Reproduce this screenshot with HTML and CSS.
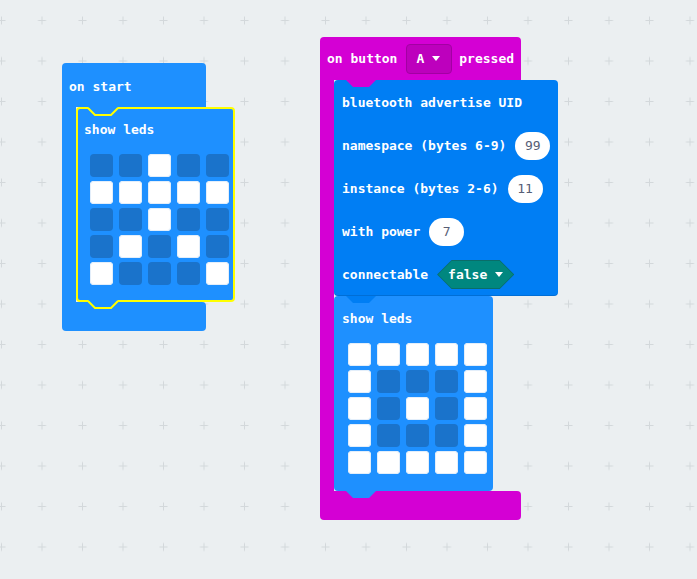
FILE: index.html
```html
<!DOCTYPE html>
<html lang="en">
<head>
  <meta charset="UTF-8" />
  <title>Blocks</title>
  <link rel="stylesheet" href="styles.css">
</head>
<body>

<div class="workspace">
  <svg class="grid" width="697" height="579">
    <defs>
      <pattern id="dots" width="40.5" height="40.5" x="-18.75" y="0.25" patternUnits="userSpaceOnUse">
        <path d="M16.25 20.25 H24.25 M20.25 16.25 V24.25" stroke="#d3d8db" stroke-width="1" />
      </pattern>
    </defs>
    <rect width="697" height="579" fill="url(#dots)" />
  </svg>

  <!-- on start -->
  <div class="stack stack-start">
    <div class="c-block">
      <div class="c-head basic">on start</div>
      <div class="c-mid">
        <div class="c-arm basic"></div>
        <div class="c-body">
          <div class="block leds basic selected">
            <svg class="notch-top" width="30" height="10" viewBox="0 0 30 10">
              <path class="fill-basic" d="M0 0 L7 7 L23 7 L30 0 Z" />
              <path class="stroke-sel" d="M0 1 L7 8 L23 8 L30 1" />
            </svg>
            <div class="label">show leds</div>
            <div class="matrix">
              <i></i><i></i><i class="on"></i><i></i><i></i>
              <i class="on"></i><i class="on"></i><i class="on"></i><i class="on"></i><i class="on"></i>
              <i></i><i></i><i class="on"></i><i></i><i></i>
              <i></i><i class="on"></i><i></i><i class="on"></i><i></i>
              <i class="on"></i><i></i><i></i><i></i><i class="on"></i>
            </div>
            <svg class="notch-bottom" width="30" height="10" viewBox="0 0 30 10">
              <path class="fill-basic" d="M0 0 H30 L23 7 H7 Z" />
              <path class="stroke-sel" d="M0 1 L7 8 L23 8 L30 1" />
            </svg>
          </div>
        </div>
      </div>
      <div class="c-foot basic"></div>
    </div>
  </div>

  <!-- on button A pressed -->
  <div class="stack stack-button">
    <div class="c-block">
      <div class="c-head input">
        <span>on button</span>
        <span class="dropdown">A
          <svg class="arrow" width="8" height="5" viewBox="0 0 8 5"><path d="M0 0 H8 L4 5 Z" /></svg>
        </span>
        <span class="after">pressed</span>
      </div>
      <div class="c-mid">
        <div class="c-arm input"></div>
        <div class="c-body">
          <div class="block bt-block bt">
            <svg class="notch-top" width="30" height="7" viewBox="0 0 30 7">
              <path class="fill-input" d="M0 0 L7 7 L23 7 L30 0 Z" />
            </svg>
            <div class="row">bluetooth advertise UID</div>
            <div class="row">namespace (bytes 6-9) <span class="num">99</span></div>
            <div class="row">instance (bytes 2-6) <span class="num">11</span></div>
            <div class="row">with power <span class="num">7</span></div>
            <div class="row">connectable
              <span class="hex"><span class="hex-in">false
                <svg class="arrow" width="8" height="5" viewBox="0 0 8 5"><path d="M0 0 H8 L4 5 Z" /></svg>
              </span></span>
            </div>
          </div>
          <div class="block leds basic">
            <svg class="notch-top" width="30" height="7" viewBox="0 0 30 7">
              <path class="fill-bt" d="M0 0 L7 7 L23 7 L30 0 Z" />
            </svg>
            <div class="label">show leds</div>
            <div class="matrix">
              <i class="on"></i><i class="on"></i><i class="on"></i><i class="on"></i><i class="on"></i>
              <i class="on"></i><i></i><i></i><i></i><i class="on"></i>
              <i class="on"></i><i></i><i class="on"></i><i></i><i class="on"></i>
              <i class="on"></i><i></i><i></i><i></i><i class="on"></i>
              <i class="on"></i><i class="on"></i><i class="on"></i><i class="on"></i><i class="on"></i>
            </div>
            <svg class="notch-bottom" width="30" height="7" viewBox="0 0 30 7">
              <path class="fill-basic" d="M0 0 H30 L23 7 H7 Z" />
            </svg>
          </div>
        </div>
      </div>
      <div class="c-foot input"></div>
    </div>
  </div>
</div>

</body>
</html>
```

FILE: styles.css
```css
* {
  box-sizing: border-box;
}
body {
  margin: 0;
  background: #ebeff1;
  font-family: "DejaVu Sans Mono", "Liberation Mono", monospace;
  font-weight: bold;
  font-size: 13px;
  color: #fff;
}
.workspace {
  position: relative;
  width: 697px;
  height: 579px;
  overflow: hidden;
}
.grid {
  position: absolute;
  top: 0;
  left: 0;
}

/* colours */
.basic { background: #1e90ff; }
.input { background: #d400d4; }
.bt { background: #007ef4; }
.fill-basic { fill: #1e90ff; }
.fill-input { fill: #d400d4; }
.fill-bt { fill: #007ef4; }
.stroke-sel {
  fill: none;
  stroke: #ffff00;
  stroke-width: 2;
}

/* stacks sit on the free canvas */
.stack {
  position: absolute;
}
.stack-start {
  left: 62px;
  top: 63px;
}
.stack-button {
  left: 320px;
  top: 37px;
}

.c-block {
  display: flex;
  flex-direction: column;
  align-items: flex-start;
}
.c-head {
  display: flex;
  align-items: center;
  padding-left: 7px;
  border-radius: 4px 4px 0 0;
  white-space: nowrap;
}
.stack-start .c-head,
.stack-start .c-foot {
  width: 144px;
}
.stack-start .c-head {
  height: 44px;
  padding-top: 3px;
}
.stack-button .c-head,
.stack-button .c-foot {
  width: 201px;
}
.stack-button .c-head {
  height: 43px;
}
.c-mid {
  display: flex;
}
.c-arm {
  width: 14px;
}
.c-body {
  display: flex;
  flex-direction: column;
  align-items: flex-start;
}
.c-foot {
  height: 29px;
  border-radius: 0 4px 4px 4px;
}

.dropdown {
  display: inline-flex;
  align-items: center;
  height: 30px;
  margin-left: 9px;
  padding: 0 11px 0 9px;
  background: #bd00bd;
  border: 1px solid #a300a3;
  border-radius: 4px;
}
.arrow {
  margin-left: 8px;
  fill: #fff;
}
.after {
  margin-left: 7px;
}

/* statement blocks */
.block {
  position: relative;
  border-radius: 4px;
}
.notch-top {
  position: absolute;
  left: 12px;
  top: 0;
  overflow: visible;
  z-index: 1;
}
.notch-bottom {
  position: absolute;
  left: 12px;
  top: 100%;
  overflow: visible;
  z-index: 1;
}
.selected {
  border: 2px solid #ffff00;
}
.selected .notch-top {
  left: 10px;
  top: -2px;
}
.selected .notch-bottom {
  left: 10px;
}

.leds {
  width: 159px;
  height: 195px;
  padding: 15px 0 0 14px;
}
.leds.selected {
  padding: 13px 0 0 12px;
}
.leds .label {
  margin-left: -6px;
  height: 16px;
  line-height: 16px;
}
.matrix {
  margin-top: 16px;
  display: grid;
  grid-template-columns: repeat(5, 23px);
  grid-auto-rows: 23px;
  column-gap: 6px;
  row-gap: 4px;
}
.matrix i {
  border-radius: 4px;
  background: #1a73cb;
}
.matrix i.on {
  background: #fff;
  box-shadow: inset 0 0 0 1px #e3eefa;
}

.bt-block {
  width: 224px;
  padding: 1px 0 0 8px;
  box-shadow: inset 0 -1px 0 rgba(0, 0, 0, 0.12);
}
.row {
  height: 43px;
  display: flex;
  align-items: center;
  gap: 9px;
  white-space: nowrap;
}
.num {
  display: inline-flex;
  justify-content: center;
  align-items: center;
  min-width: 35px;
  height: 28px;
  padding: 0 9px;
  border-radius: 14px;
  background: #fff;
  color: #575e75;
  font-weight: normal;
}
.hex {
  display: inline-flex;
  padding: 1px;
  background: #0a6d69;
  clip-path: polygon(0 50%, 14.5px 0, calc(100% - 14.5px) 0, 100% 50%, calc(100% - 14.5px) 100%, 14.5px 100%);
}
.hex-in {
  display: inline-flex;
  align-items: center;
  height: 27px;
  padding: 0 10px 0 10px;
  background: #00877f;
  clip-path: polygon(0 50%, 13.5px 0, calc(100% - 13.5px) 0, 100% 50%, calc(100% - 13.5px) 100%, 13.5px 100%);
}
```
